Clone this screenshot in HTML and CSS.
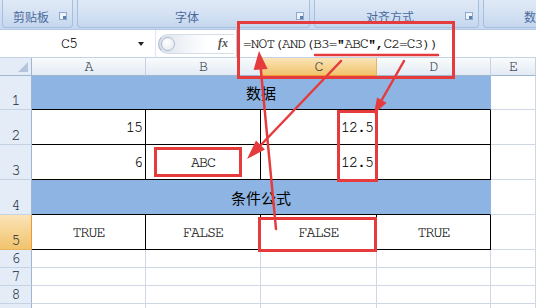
FILE: index.html
```html
<!DOCTYPE html>
<html>
<head>
<meta charset="utf-8">
<link rel="stylesheet" href="styles.css">
</head>
<body>
<div class="app">
  <div class="ribbon">
    <div class="group g1"><span class="glabel">剪贴板</span><span class="launch"></span></div>
    <div class="group g2"><span class="glabel">字体</span><span class="launch"></span></div>
    <div class="group g3"><span class="glabel">对齐方式</span><span class="launch"></span></div>
    <div class="group g4"><span class="glabel left">数字</span></div>
  </div>
  <div class="fbar">
    <div class="namebox"><span class="nbtext">C5</span><span class="dd"></span></div>
    <div class="fxwrap"><div class="pill"><span class="knob"></span><span class="fx">fx</span></div></div>
    <div class="finput">=NOT(AND(B3="ABC",C2=C3))</div>
  </div>
  <div class="sheet">
    <div class="corner"><span class="tri"></span></div>
    <div class="ch">A</div>
    <div class="ch">B</div>
    <div class="ch sel">C</div>
    <div class="ch">D</div>
    <div class="ch">E</div>

    <div class="rh">1</div>
    <div class="c blue span4 bb">数据</div>
    <div class="c"></div>

    <div class="rh">2</div>
    <div class="c b r">15</div>
    <div class="c b"></div>
    <div class="c b r">12.5</div>
    <div class="c b"></div>
    <div class="c"></div>

    <div class="rh">3</div>
    <div class="c b r">6</div>
    <div class="c b m">ABC</div>
    <div class="c b r">12.5</div>
    <div class="c b"></div>
    <div class="c"></div>

    <div class="rh">4</div>
    <div class="c blue span4 bb">条件公式</div>
    <div class="c"></div>

    <div class="rh sel">5</div>
    <div class="c b m">TRUE</div>
    <div class="c b m">FALSE</div>
    <div class="c b m">FALSE</div>
    <div class="c b m">TRUE</div>
    <div class="c"></div>

    <div class="rh">6</div>
    <div class="c"></div><div class="c"></div><div class="c"></div><div class="c"></div><div class="c"></div>
    <div class="rh">7</div>
    <div class="c"></div><div class="c"></div><div class="c"></div><div class="c"></div><div class="c"></div>
    <div class="rh">8</div>
    <div class="c"></div><div class="c"></div><div class="c"></div><div class="c"></div><div class="c"></div>
    <div class="rh"></div>
    <div class="c"></div><div class="c"></div><div class="c"></div><div class="c"></div><div class="c"></div>
  </div>

  <svg class="annot" width="536" height="308" viewBox="0 0 536 308">
    <g fill="none" stroke="#e63b3d" stroke-width="3">
      <rect x="238.5" y="22.5" width="215" height="55"/>
      <rect x="155.5" y="148.5" width="85" height="27"/>
      <rect x="338.5" y="111.5" width="38" height="69"/>
      <rect x="259.5" y="218.5" width="116" height="32"/>
    </g>
    <g stroke="#e63b3d" stroke-width="2.5" stroke-linecap="round">
      <line x1="315" y1="55" x2="438" y2="55"/>
      <line x1="276" y1="229" x2="260.5" y2="66"/>
      <line x1="341" y1="61" x2="258" y2="148"/>
      <line x1="404" y1="61" x2="380" y2="103"/>
    </g>
    <g fill="#e63b3d">
      <polygon points="259,51 267.6,69 253.6,70"/>
      <polygon points="247,159 265,149.5 256,140.5"/>
      <polygon points="374,114 386.6,102.8 377,97.4"/>
    </g>
  </svg>
</div>
</body>
</html>
```
FILE: styles.css
```css
* { box-sizing: border-box; }
html, body { margin: 0; padding: 0; }
body { width: 536px; height: 308px; overflow: hidden; background: #fff; }
.app { position: relative; width: 536px; height: 308px; overflow: hidden; }

.ribbon {
  height: 30px;
  display: flex;
  gap: 4px;
  padding: 0 0 0 2px;
  background: linear-gradient(#d9e6f5, #c6d8ee);
  border-bottom: 1px solid #b2c8e4;
}
.group {
  height: 28px;
  flex: none;
  display: flex;
  align-items: flex-end;
  padding-bottom: 2px;
  border: 1px solid #a6bfe0;
  border-top: none;
  border-radius: 0 0 4px 4px;
  background: linear-gradient(#dfe9f6 0%, #d6e3f4 45%, #c5d7ee 100%);
}
.g1 { width: 71px; }
.g2 { width: 233px; }
.g3 { width: 165px; }
.g4 { width: 120px; }
.glabel {
  flex: 1;
  text-align: center;
  font: 12px/16px "Noto Sans CJK SC", sans-serif;
  color: #4a6a9c;
}
.glabel.left { text-align: left; padding-left: 40px; }
.launch {
  width: 8px; height: 8px;
  margin: 0 5px 5px 0;
  border: 1px solid #8fa9cc;
  background: #eef3fa;
  position: relative;
}
.launch::after {
  content: "";
  position: absolute;
  right: 0; bottom: 0;
  width: 3px; height: 3px;
  background: #5d7fb0;
}

.fbar {
  height: 28px;
  display: flex;
  align-items: stretch;
  background: #fff;
  border-bottom: 1px solid #c5d3e6;
}
.namebox {
  width: 156px;
  display: flex;
  align-items: center;
  border-right: 1px solid #dde5f0;
}
.nbtext {
  width: 138px;
  text-align: center;
  font: 15px "FreeMono", "Nimbus Mono PS", "Courier 10 Pitch", "Liberation Mono", monospace;
  letter-spacing: -1px;
  -webkit-text-stroke: 0.15px #000;
  color: #000;
}
.dd {
  width: 0; height: 0;
  border-left: 3.5px solid transparent;
  border-right: 3.5px solid transparent;
  border-top: 4px solid #222;
}
.fxwrap {
  width: 80px;
  display: flex;
  align-items: center;
  padding-left: 2px;
}
.pill {
  width: 76px;
  height: 20px;
  display: flex;
  align-items: center;
  justify-content: space-between;
  border-radius: 10px 0 0 10px;
  background: linear-gradient(90deg, #d6dee9 0%, #eef2f7 30%, #fff 65%);
  border-left: 1px solid #a9b8cb;
  border-top: 1px solid #d5dde8;
  border-bottom: 1px solid #d5dde8;
  padding: 0 6px 0 2px;
}
.knob {
  width: 14px; height: 14px;
  border-radius: 50%;
  border: 1px solid #aebccd;
  background: radial-gradient(circle at 40% 35%, #fff, #dfe6ee);
}
.fx {
  font: italic bold 12px "Liberation Serif", serif;
  color: #555;
}
.finput {
  flex: 1;
  display: flex;
  align-items: center;
  padding-left: 6px;
  border-left: 1px solid #b8c7d9;
  font: 14.5px "FreeMono", "Nimbus Mono PS", "Courier 10 Pitch", "Liberation Mono", monospace;
  letter-spacing: -0.9px;
  -webkit-text-stroke: 0.15px #000;
  color: #000;
  white-space: nowrap;
}

.sheet {
  display: grid;
  grid-template-columns: 32px 114px 115px 116px 114px 45px;
  grid-template-rows: 18px 34px 35px 35px 35px 35px 18px 18px 18px 18px;
  font: 15px "FreeMono", "Nimbus Mono PS", "Courier 10 Pitch", "Liberation Mono", monospace;
  letter-spacing: -1px;
  -webkit-text-stroke: 0.15px #000;
  color: #000;
}
.corner {
  background: #e4ecf7;
  border-right: 1px solid #9eb6ce;
  border-bottom: 1px solid #9eb6ce;
  position: relative;
}
.tri {
  position: absolute;
  right: 3px; bottom: 3px;
  width: 0; height: 0;
  border-left: 10px solid transparent;
  border-bottom: 10px solid #b5c6dc;
}
.ch {
  background: linear-gradient(#f9fcfd, #e3eaf4);
  border-right: 1px solid #c5d2e3;
  border-bottom: 1px solid #9eb6ce;
  display: flex;
  align-items: center;
  justify-content: center;
  color: #27313f;
  -webkit-text-stroke: 0.1px #27313f;
}
.ch.sel {
  background: linear-gradient(#fbe4b8, #f1c36c);
  border-right-color: #e8b45f;
  border-bottom-color: #f29536;
}
.rh {
  background: #e4ecf7;
  border-right: 1px solid #9eb6ce;
  border-bottom: 1px solid #c5d2e3;
  display: flex;
  align-items: flex-end;
  justify-content: center;
  line-height: 17px;
  color: #27313f;
  -webkit-text-stroke: 0.1px #27313f;
}
.rh.sel {
  background: linear-gradient(#fbe4b8, #f1c36c);
  border-right-color: #f29536;
  border-bottom-color: #e8b45f;
}
.c {
  border-right: 1px solid #d0d7e5;
  border-bottom: 1px solid #d0d7e5;
  display: flex;
  align-items: center;
  white-space: nowrap;
}
.c.b { border-right-color: #000; border-bottom-color: #000; }
.c.bb { border-bottom-color: #000; }
.c.r { justify-content: flex-end; padding-right: 3px; }
.c.m { justify-content: center; }
.blue {
  background: #8db4e2;
  justify-content: center;
  font: 15px "Noto Sans CJK SC", sans-serif;
  letter-spacing: 0;
  -webkit-text-stroke: 0;
  border-right-color: #8db4e2;
}
.span4 { grid-column: span 4; }

.annot {
  position: absolute;
  left: 0; top: 0;
  pointer-events: none;
}
```
